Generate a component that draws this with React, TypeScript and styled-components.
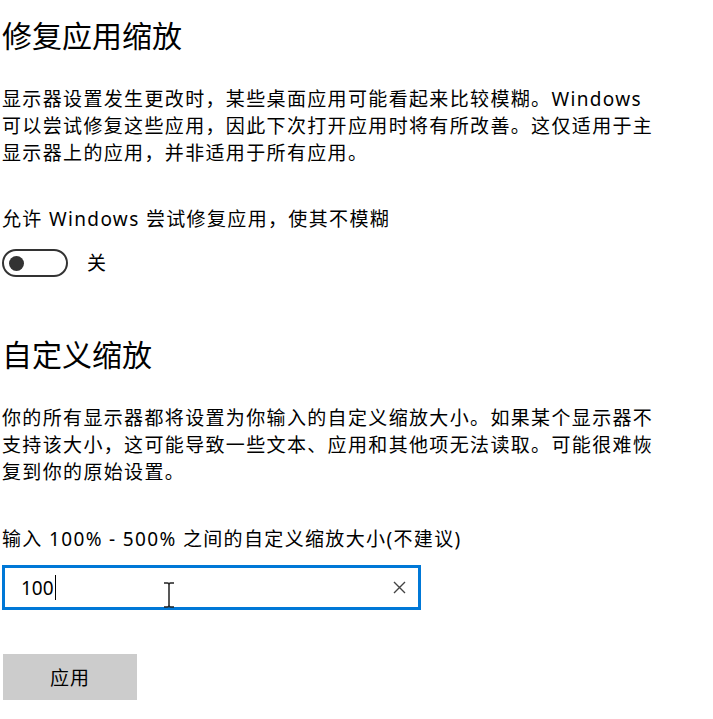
import React from 'react';
import styled, { createGlobalStyle } from 'styled-components';

const GlobalStyle = createGlobalStyle`
  html, body {
    margin: 0;
    padding: 0;
    background: #ffffff;
  }
  body {
    font-family: "Noto Sans", "Noto Sans CJK SC", sans-serif;
    color: #000000;
  }
`

const Page = styled.div`
  display: flex;
  flex-direction: column;
  align-items: flex-start;
  padding: 16px 0 0 2px;
  width: 713px;
  height: 719px;
  box-sizing: border-box;
  overflow: hidden;
`

const Title = styled.h2<{ $gap?: number }>`
  margin: ${p => p.$gap ?? 0}px 0 0 0;
  font-size: 30px;
  font-weight: 400;
  line-height: 40px;
  color: #000;
`

const Paragraph = styled.p<{ $gap: number }>`
  margin: ${p => p.$gap}px 0 0 0;
  width: 660px;
  font-size: 19px;
  letter-spacing: 1.35px;
  line-height: 27px;
  color: #000;
`

const Label = styled.div<{ $gap: number }>`
  margin-top: ${p => p.$gap}px;
  font-size: 19px;
  letter-spacing: 1.35px;
  line-height: 27px;
  color: #000;
`

const ToggleRow = styled.div`
  display: flex;
  align-items: center;
  gap: 19px;
  margin-top: 16px;
`

const ToggleTrack = styled.div`
  display: flex;
  align-items: center;
  width: 66px;
  height: 28px;
  box-sizing: border-box;
  border: 2px solid #333333;
  border-radius: 14px;
  padding-left: 5px;
`

const ToggleKnob = styled.div`
  width: 15px;
  height: 15px;
  border-radius: 50%;
  background: #333333;
`

const ToggleText = styled.span`
  font-size: 19px;
  line-height: 27px;
`

const TextBoxWrap = styled.div`
  position: relative;
  margin-top: 12px;
`

const TextBox = styled.div`
  display: flex;
  align-items: center;
  width: 419px;
  height: 45px;
  box-sizing: border-box;
  border: 3px solid #0078d7;
  padding: 0 9px 0 16px;
`

const Value = styled.span`
  font-size: 19px;
  color: #000;
  line-height: 26px;
`

const Caret = styled.span`
  width: 1px;
  height: 25px;
  background: #000;
  margin-left: 1px;
`

const ClearButton = styled.button`
  margin-left: auto;
  display: flex;
  align-items: center;
  justify-content: center;
  width: 20px;
  height: 20px;
  padding: 0;
  border: none;
  background: none;
  cursor: pointer;
`

const Cursor = styled.svg`
  position: absolute;
  left: 161px;
  top: 17px;
  pointer-events: none;
`

const ApplyButton = styled.button`
  margin-top: 44px;
  margin-left: 1px;
  width: 134px;
  height: 46px;
  border: none;
  background: #cccccc;
  font-family: "Noto Sans", "Noto Sans CJK SC", sans-serif;
  font-size: 19px;
  letter-spacing: 1px;
  color: #000;
`

function App(): React.ReactElement {
  return (
    <Page>
      <GlobalStyle />
      <Title>修复应用缩放</Title>
      <Paragraph $gap={30}>
        显示器设置发生更改时，某些桌面应用可能看起来比较模糊。Windows 可以尝试修复这些应用，因此下次打开应用时将有所改善。这仅适用于主显示器上的应用，并非适用于所有应用。
      </Paragraph>
      <Label $gap={39}>允许 Windows 尝试修复应用，使其不模糊</Label>
      <ToggleRow>
        <ToggleTrack>
          <ToggleKnob />
        </ToggleTrack>
        <ToggleText>关</ToggleText>
      </ToggleRow>
      <Title $gap={58}>自定义缩放</Title>
      <Paragraph $gap={30}>
        你的所有显示器都将设置为你输入的自定义缩放大小。如果某个显示器不支持该大小，这可能导致一些文本、应用和其他项无法读取。可能很难恢复到你的原始设置。
      </Paragraph>
      <Label $gap={40}>输入 100% - 500% 之间的自定义缩放大小(不建议)</Label>
      <TextBoxWrap>
        <TextBox>
          <Value>100</Value>
          <Caret />
          <ClearButton aria-label="清除">
            <svg width="13" height="13" viewBox="0 0 13 13">
              <path d="M1 1 L12 12 M12 1 L1 12" stroke="#444" strokeWidth="1.4" fill="none" />
            </svg>
          </ClearButton>
        </TextBox>
        <Cursor width="12" height="26" viewBox="0 0 12 26">
          <path d="M1 1 H4.5 Q6 1 6 3 V23 Q6 25 4.5 25 H1 M11 1 H7.5 Q6 1 6 3 M6 23 Q6 25 7.5 25 H11" stroke="#222" strokeWidth="1.5" fill="none" />
        </Cursor>
      </TextBoxWrap>
      <ApplyButton>应用</ApplyButton>
    </Page>
  );
}

export default App;
